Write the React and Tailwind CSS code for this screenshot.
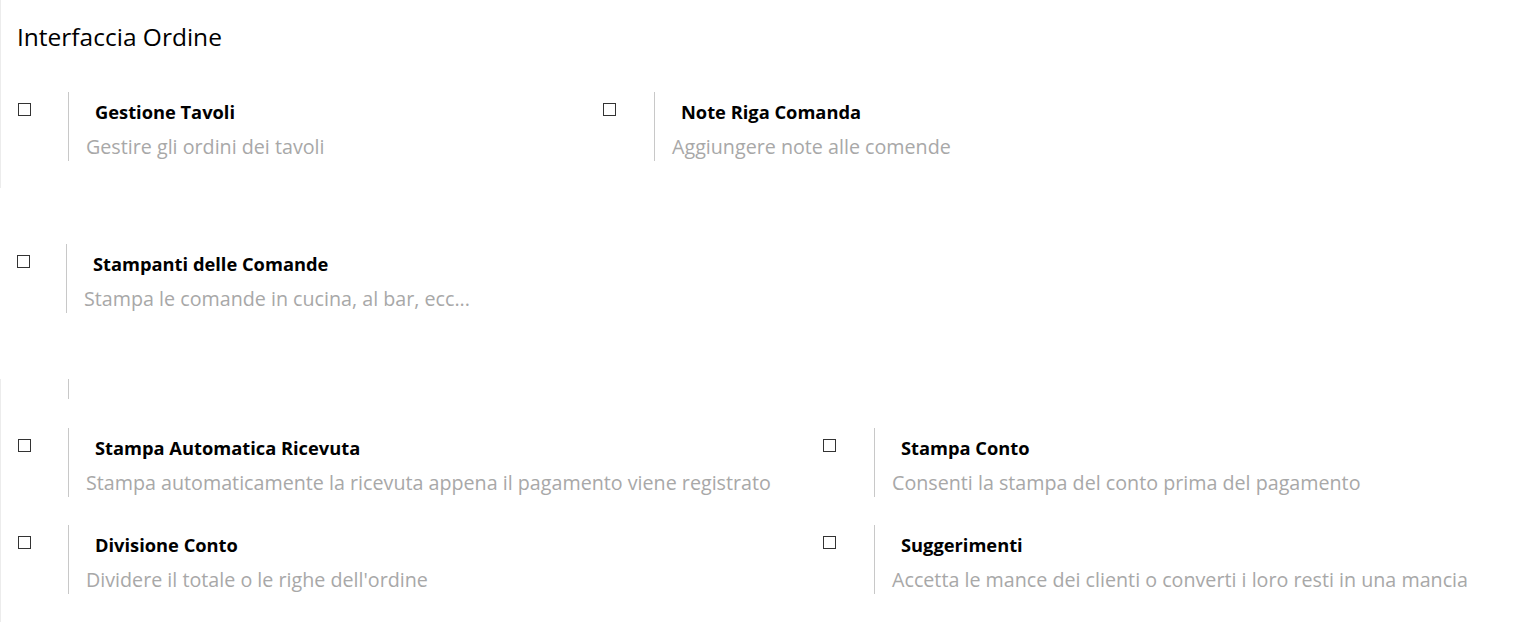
import React from 'react';

const Item = ({ title, desc, box = 'w-[67px]' }) => (
    <div className="flex">
        <div className={`${box} shrink-0 pl-[17px] pt-[11px]`}>
            <div className="w-[13px] h-[13px] border border-[#333]" />
        </div>
        <div className="border-l border-[#c8c8c8] pl-[17px] h-[69px]">
            <div className="pl-[9px] pt-[9px] text-[18.3px] leading-[22px] font-bold text-black">{title}</div>
            <div className="pt-[13px] text-[19.7px] leading-[22px] text-[#a8a8a8]">{desc}</div>
        </div>
    </div>
);

const App = () => {
    return (
        <div className="w-[1529px] h-[622px] bg-white overflow-hidden font-['Open_Sans',sans-serif]">
            <div className="border-l border-[#ececec] h-[188px]">
                <div className="pl-[16px] pt-[22px] text-[24.5px] leading-[30px] text-black">Interfaccia Ordine</div>
                <div className="grid grid-cols-[585px_1fr] mt-[40px]">
                    <Item title="Gestione Tavoli" desc="Gestire gli ordini dei tavoli" />
                    <Item title="Note Riga Comanda" desc="Aggiungere note alle comende" box="w-[68px]" />
                </div>
            </div>
            <div className="mt-[56px]">
                <Item title="Stampanti delle Comande" desc="Stampa le comande in cucina, al bar, ecc..." box="w-[66px]" />
            </div>
            <div className="border-l border-[#ececec] mt-[66px] h-[244px]">
                <div className="ml-[67px] w-px h-[20px] bg-[#c8c8c8]" />
                <div className="grid grid-cols-[805px_1fr] gap-y-[28px] mt-[29px]">
                    <Item title="Stampa Automatica Ricevuta" desc="Stampa automaticamente la ricevuta appena il pagamento viene registrato" />
                    <Item title="Stampa Conto" desc="Consenti la stampa del conto prima del pagamento" box="w-[68px]" />
                    <Item title="Divisione Conto" desc="Dividere il totale o le righe dell'ordine" />
                    <Item title="Suggerimenti" desc="Accetta le mance dei clienti o converti i loro resti in una mancia" box="w-[68px]" />
                </div>
            </div>
        </div>
    );
};

export default App;
